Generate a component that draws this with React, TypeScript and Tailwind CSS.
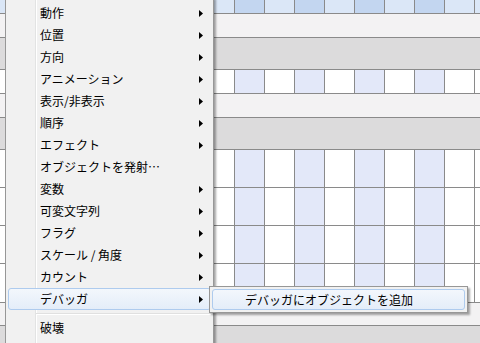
import React from "react";

const FONT = { fontFamily: '"Meiryo UI", "Noto Sans CJK JP", "Noto Sans", sans-serif' };

const items: { label: string; sub?: boolean; hover?: boolean }[] = [
  { label: "動作", sub: true },
  { label: "位置", sub: true },
  { label: "方向", sub: true },
  { label: "アニメーション", sub: true },
  { label: "表示/非表示", sub: true },
  { label: "順序", sub: true },
  { label: "エフェクト", sub: true },
  { label: "オブジェクトを発射…" },
  { label: "変数", sub: true },
  { label: "可変文字列", sub: true },
  { label: "フラグ", sub: true },
  { label: "スケール / 角度", sub: true },
  { label: "カウント", sub: true },
  { label: "デバッガ", sub: true, hover: true },
];

const cols = Array.from({ length: 15 }, (_, i) => i);

const CellRow = ({ h, top }: { h: string; top?: boolean }) => (
  <div className={`flex ${h} border-b border-[#8a8a8a]`}>
    <div className={`w-[25px] shrink-0 border-r border-[#8a8a8a] ${top ? "bg-[#dae6f6]" : "bg-white"}`} />
    {cols.map((i) => (
      <div
        key={i}
        className={`w-[30px] shrink-0 border-r border-[#8a8a8a] ${
          top ? (i % 2 ? "bg-[#c3d6f0]" : "bg-[#dbe7f7]") : i % 2 ? "bg-[#e3e8f9]" : "bg-white"
        }`}
      />
    ))}
    <div className={`flex-1 ${top ? "bg-[#dbe7f7]" : "bg-white"}`} />
  </div>
);

const Band = ({ h, gray }: { h: string; gray?: boolean }) => (
  <div className={`${h} border-b border-[#8a8a8a] ${gray ? "bg-[#dcdbdc]" : "bg-[#f3f2f3]"}`} />
);

const Arrow = () => (
  <svg width="4" height="7" viewBox="0 0 4 7">
    <path d="M0 0 L4 3.5 L0 7 Z" fill="#000" />
  </svg>
);

export default function App() {
  return (
    <div className="relative w-[480px] h-[343px] overflow-hidden bg-[#dcdbdc]" style={FONT}>
      {/* table behind the menu */}
      <div className="flex flex-col">
        <CellRow h="h-[14px]" top />
        <Band h="h-[24px]" />
        <Band h="h-[32px]" gray />
        <CellRow h="h-[24px]" />
        <Band h="h-[24px]" />
        <Band h="h-[32px]" gray />
        <CellRow h="h-[38px]" />
        <CellRow h="h-[38px]" />
        <CellRow h="h-[38px]" />
        <CellRow h="h-[39px]" />
        <Band h="h-[23px]" />
      </div>

      {/* context menu */}
      <div className="absolute left-[5px] top-[-3px] w-[209px] h-[360px] bg-[#f1f1f1] border border-[#979797] shadow-[2px_2px_2px_rgba(0,0,0,0.35)] pt-[4px]">
        <div className="absolute left-[29px] top-0 bottom-0 w-[2px] border-l border-[#e2e3e3] bg-transparent border-r border-r-white" />
        {items.map((it) => (
          <div
            key={it.label}
            className={`relative mx-[2px] h-[22px] flex items-center justify-between pl-[31px] pr-[7px] rounded-[3px] border text-[12px] text-black ${
              it.hover
                ? "border-[#aecbee] bg-gradient-to-b from-[#f3f7fc] to-[#e4edf9]"
                : "border-transparent"
            }`}
          >
            <span className="leading-none">{it.label}</span>
            {it.sub && <Arrow />}
          </div>
        ))}
        <div className="relative h-[7px] flex items-center pl-[30px] pr-[2px]">
          <div className="w-full h-[2px] border-t border-[#e0e0e0] border-b border-b-white" />
        </div>
        <div className="relative mx-[2px] h-[22px] flex items-center pl-[31px] text-[12px] text-black border border-transparent">
          <span className="leading-none">破壊</span>
        </div>
      </div>

      {/* submenu */}
      <div className="absolute left-[209px] top-[286px] w-[259px] h-[27px] bg-[#f1f1f1] border border-[#979797] shadow-[2px_2px_2px_rgba(0,0,0,0.35)] p-[2px]">
        <div className="h-full flex items-center pl-[32px] rounded-[3px] border border-[#aecbee] bg-gradient-to-b from-[#f3f7fc] to-[#e4edf9] text-[12px] text-black">
          <span className="leading-none">デバッガにオブジェクトを追加</span>
        </div>
      </div>
    </div>
  );
}
